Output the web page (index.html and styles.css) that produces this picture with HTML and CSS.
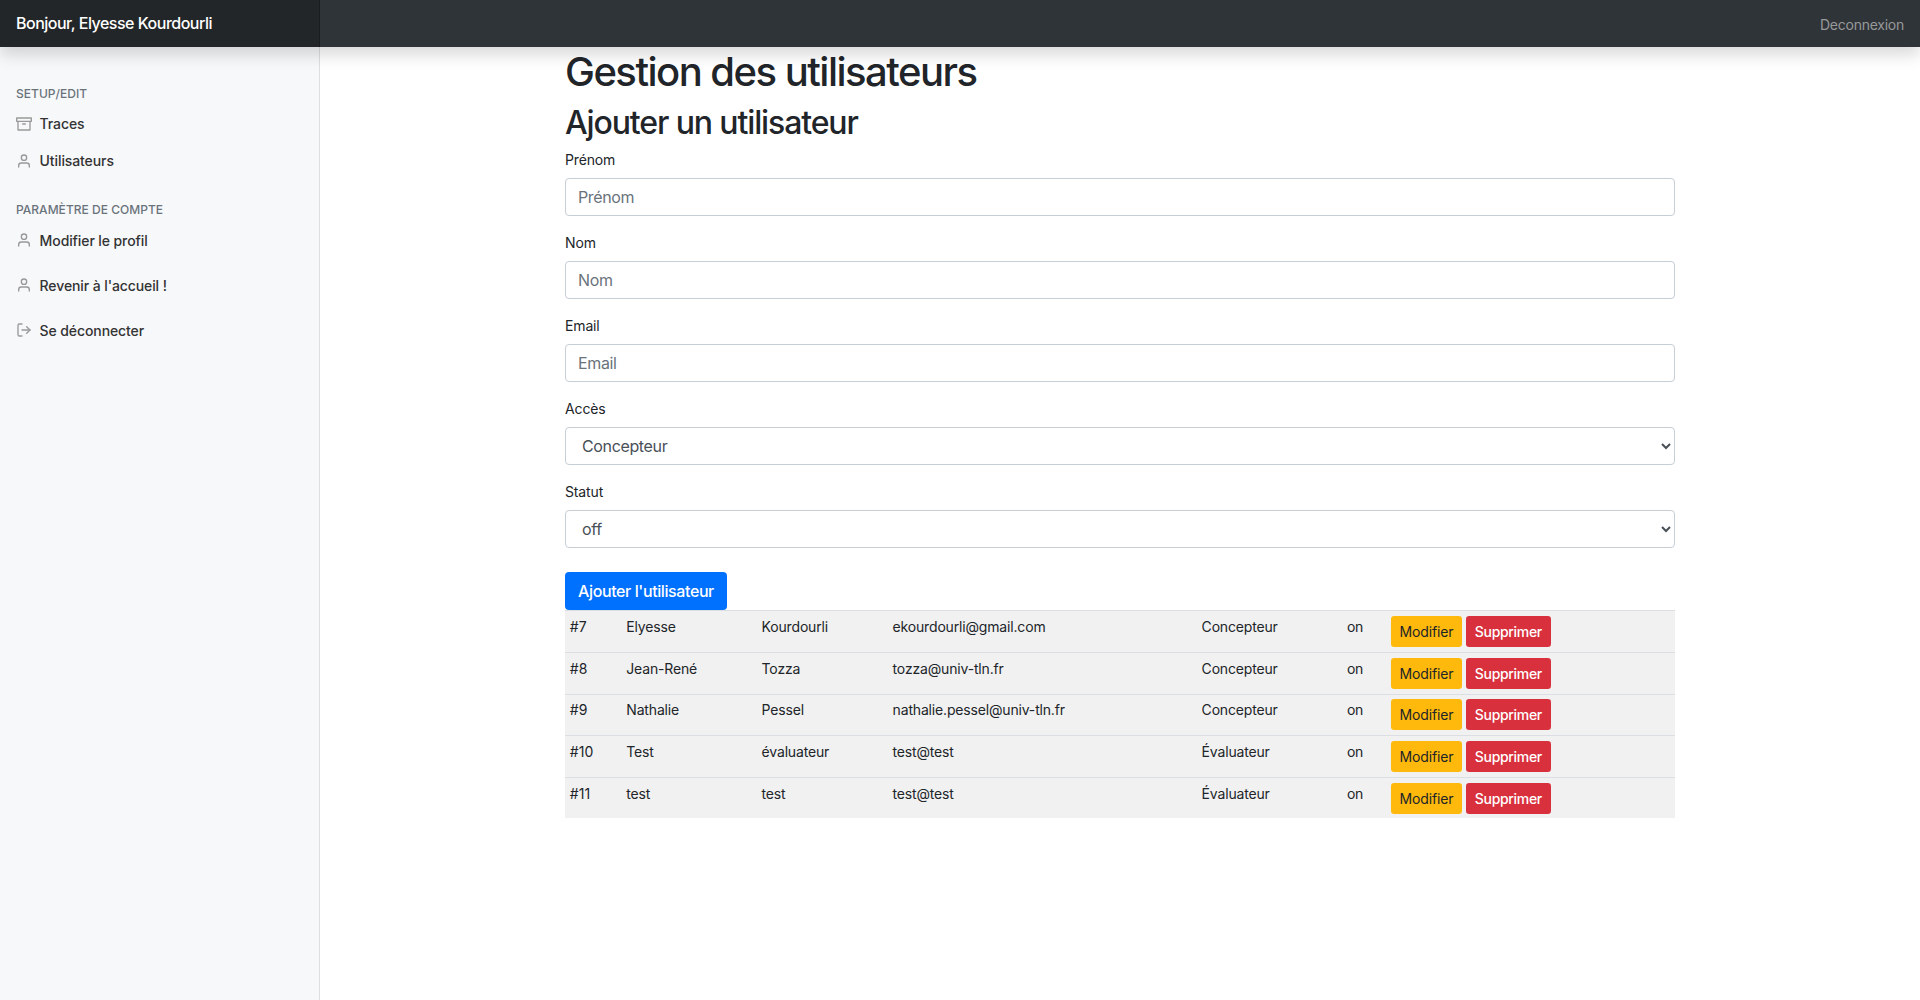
FILE: index.html
```html
<!DOCTYPE html>
<html lang="fr">
<head>
<meta charset="utf-8">
<title>Gestion des utilisateurs</title>
<link rel="stylesheet" href="styles.css">
</head>
<body>
<svg class="sprite" aria-hidden="true">
  <symbol id="user" viewBox="0 0 24 24"><path d="M20 21v-2a4 4 0 0 0-4-4H8a4 4 0 0 0-4 4v2"/><circle cx="12" cy="7" r="4"/></symbol>
  <symbol id="archive" viewBox="0 0 24 24"><path d="M21 8v13H3V8"/><rect x="1" y="3" width="22" height="5"/><path d="M10 12h4"/></symbol>
  <symbol id="log-out" viewBox="0 0 24 24"><path d="M9 21H5a2 2 0 0 1-2-2V5a2 2 0 0 1 2-2h4"/><path d="M16 17l5-5-5-5"/><path d="M21 12H9"/></symbol>
</svg>
<header class="navbar">
  <a class="brand">Bonjour, Elyesse Kourdourli</a>
  <a class="signout">Deconnexion</a>
</header>
<div class="layout">
  <nav class="sidebar">
    <h6 class="sidebar-heading">Setup/Edit</h6>
    <ul class="nav">
      <li><a class="nav-link"><svg class="icon"><use href="#archive"/></svg><span>Traces</span></a></li>
      <li><a class="nav-link"><svg class="icon"><use href="#user"/></svg><span>Utilisateurs</span></a></li>
    </ul>
    <h6 class="sidebar-heading">Paramètre de compte</h6>
    <ul class="nav nav-spaced">
      <li><a class="nav-link"><svg class="icon"><use href="#user"/></svg><span>Modifier le profil</span></a></li>
      <li><a class="nav-link"><svg class="icon"><use href="#user"/></svg><span>Revenir à l'accueil !</span></a></li>
      <li><a class="nav-link"><svg class="icon"><use href="#log-out"/></svg><span>Se déconnecter</span></a></li>
    </ul>
  </nav>
  <main class="main">
    <div class="container">
      <h1>Gestion des utilisateurs</h1>
      <h2>Ajouter un utilisateur</h2>
      <form>
        <div class="form-group"><label for="prenom">Prénom</label><input class="form-control" id="prenom" placeholder="Prénom"></div>
        <div class="form-group"><label for="nom">Nom</label><input class="form-control" id="nom" placeholder="Nom"></div>
        <div class="form-group"><label for="email">Email</label><input class="form-control" id="email" placeholder="Email"></div>
        <div class="form-group"><label for="acces">Accès</label><select class="form-control" id="acces"><option>Concepteur</option><option>Évaluateur</option></select></div>
        <div class="form-group"><label for="statut">Statut</label><select class="form-control" id="statut"><option>off</option><option>on</option></select></div>
        <button type="button" class="btn btn-primary">Ajouter l'utilisateur</button>
      </form>
      <table class="table">
        <colgroup><col class="c-id"><col class="c-first"><col class="c-last"><col class="c-mail"><col class="c-role"><col class="c-state"><col></colgroup>
        <tbody>
          <tr><td class="id">#7</td><td>Elyesse</td><td>Kourdourli</td><td>ekourdourli@gmail.com</td><td>Concepteur</td><td>on</td><td><div class="actions"><button class="btn btn-sm btn-warning">Modifier</button><button class="btn btn-sm btn-danger">Supprimer</button></div></td></tr>
          <tr><td class="id">#8</td><td>Jean-René</td><td>Tozza</td><td>tozza@univ-tln.fr</td><td>Concepteur</td><td>on</td><td><div class="actions"><button class="btn btn-sm btn-warning">Modifier</button><button class="btn btn-sm btn-danger">Supprimer</button></div></td></tr>
          <tr><td class="id">#9</td><td>Nathalie</td><td>Pessel</td><td>nathalie.pessel@univ-tln.fr</td><td>Concepteur</td><td>on</td><td><div class="actions"><button class="btn btn-sm btn-warning">Modifier</button><button class="btn btn-sm btn-danger">Supprimer</button></div></td></tr>
          <tr><td class="id">#10</td><td>Test</td><td>évaluateur</td><td>test@test</td><td>Évaluateur</td><td>on</td><td><div class="actions"><button class="btn btn-sm btn-warning">Modifier</button><button class="btn btn-sm btn-danger">Supprimer</button></div></td></tr>
          <tr><td class="id">#11</td><td>test</td><td>test</td><td>test@test</td><td>Évaluateur</td><td>on</td><td><div class="actions"><button class="btn btn-sm btn-warning">Modifier</button><button class="btn btn-sm btn-danger">Supprimer</button></div></td></tr>
        </tbody>
      </table>
    </div>
  </main>
</div>
</body>
</html>
```
FILE: styles.css
```css
*, *::before, *::after { box-sizing: border-box; }

body {
  margin: 0;
  min-height: 100vh;
  display: flex;
  flex-direction: column;
  font-family: Inter, "Liberation Sans", sans-serif;
  font-size: 14px;
  line-height: 1.5;
  letter-spacing: -.14px;
  color: #212529;
  background: #fff;
}

.sprite { display: none; }

.navbar {
  position: relative;
  z-index: 1;
  display: flex;
  justify-content: space-between;
  align-items: center;
  height: 47px;
  background: #2f3438;
  box-shadow: 0 8px 16px rgba(0, 0, 0, .15);
}

.brand {
  width: 320px;
  height: 47px;
  padding: 0 16px;
  line-height: 46px;
  font-size: 16px;
  font-weight: 500;
  letter-spacing: -.5px;
  color: #fff;
  background: #232629;
  box-shadow: inset -1px 0 0 rgba(0, 0, 0, .25);
}

.signout {
  padding: 1px 16px 0;
  letter-spacing: -.25px;
  color: #97999b;
}

.layout { flex: 1; display: flex; }

.sidebar {
  width: 320px;
  padding-top: 15.7px;
  background: #f7f8fa;
  box-shadow: inset -1px 0 0 rgba(0, 0, 0, .1);
}

.sidebar-heading {
  margin: 24px 0 4px;
  padding: 0 16px;
  font-size: 12px;
  font-weight: 500;
  line-height: 14.6px;
  letter-spacing: .02px;
  text-transform: uppercase;
  color: #6a737b;
}

.nav { margin: 0; padding: 0; list-style: none; }
.nav-spaced { display: flex; flex-direction: column; gap: 8px; }

.nav-link {
  display: flex;
  align-items: center;
  gap: 7.6px;
  padding: 8px 16px;
  font-weight: 500;
  letter-spacing: -.1px;
  color: #333;
}

.icon {
  width: 16px;
  height: 16px;
  fill: none;
  stroke: #999;
  stroke-width: 2;
  stroke-linecap: round;
  stroke-linejoin: round;
}

.main { flex: 1; }
.container { width: 1110px; margin: 0 auto; }

h1, h2 { font-weight: 500; line-height: 1.2; }
h1 { margin: 0 0 8px; padding-top: .6px; font-size: 40px; letter-spacing: -1.52px; }
h2 { margin: 0 0 7.4px; font-size: 32px; letter-spacing: -1.12px; }

.form-group { margin-bottom: 16px; }
.form-group label { display: block; margin-bottom: 8px; }

.form-control {
  display: block;
  width: 100%;
  height: 38px;
  padding: 6px 12px;
  font-family: inherit;
  font-size: 16px;
  line-height: 1.5;
  letter-spacing: -.36px;
  color: #495057;
  background: #fff;
  border: 1px solid #c6ced6;
  border-radius: 4px;
}
.form-control::placeholder { color: #6a737b; opacity: 1; }

.btn {
  padding: 6px 12px;
  font-family: inherit;
  font-size: 16px;
  line-height: 1.5;
  letter-spacing: -.14px;
  border: 1px solid transparent;
  border-radius: 4px;
}
.btn-primary {
  display: block;
  width: 162px;
  height: 38px;
  margin-top: 24px;
  font-weight: 500;
  color: #fff;
  background: #0070ff;
  letter-spacing: -.4px;
  white-space: nowrap;
}
.btn-sm { height: 31px; padding: 4px 0; font-size: 14px; border-radius: 3.2px; }
.btn-warning { width: 71px; color: #212529; background: #ffb90c; }
.btn-danger { width: 85px; font-weight: 500; letter-spacing: -.32px; color: #fff; background: #d8313d; }

.table {
  width: 100%;
  table-layout: fixed;
  border-collapse: separate;
  border-spacing: 0;
}
.table tr { background: #f1f1f1; }
.table td {
  height: 41.6px;
  padding: 4.8px;
  vertical-align: top;
  border-top: 1px solid #dbdfe3;
  letter-spacing: -.17px;
  white-space: nowrap;
}
.table .id { letter-spacing: .1px; }
.c-id { width: 56.5px; }
.c-first { width: 135.3px; }
.c-last { width: 131px; }
.c-mail { width: 309px; }
.c-role { width: 145.3px; }
.c-state { width: 44px; }
.actions { display: flex; gap: 4px; }
```
